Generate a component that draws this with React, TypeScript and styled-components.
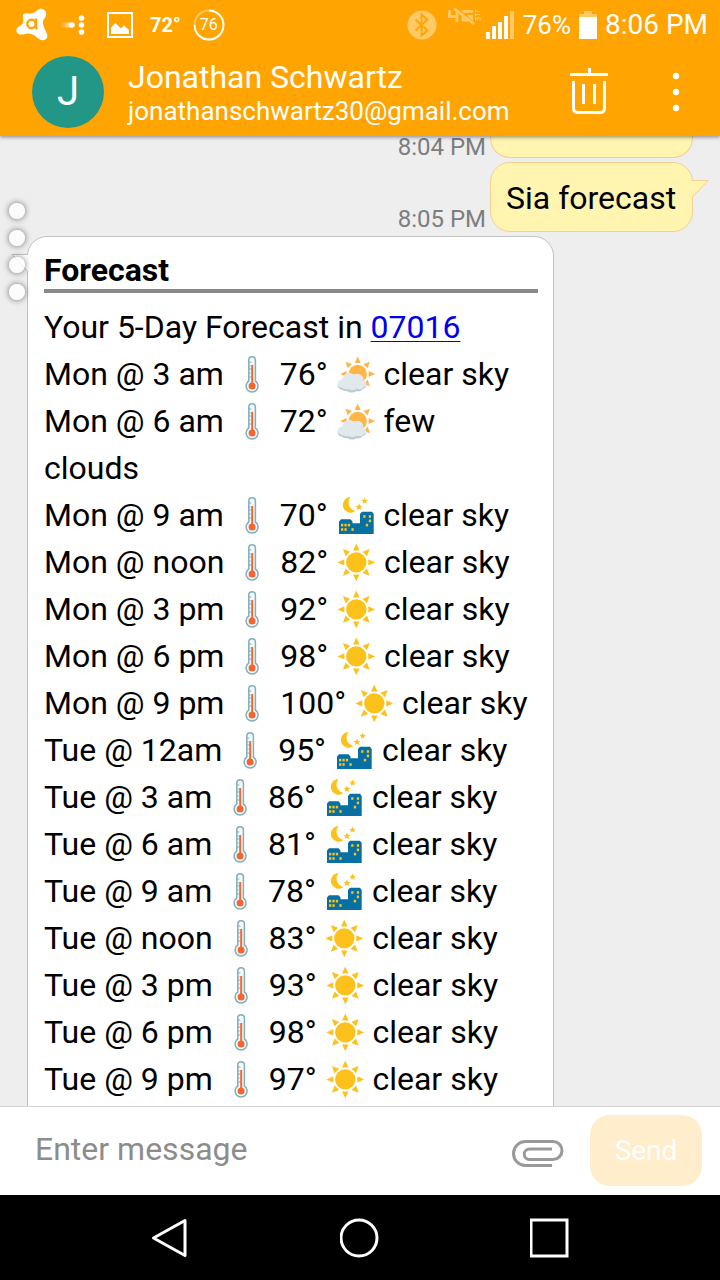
import React from "react";
import styled, { createGlobalStyle } from "styled-components";

const GlobalStyle = createGlobalStyle`
  * { box-sizing: border-box; }
  body { margin: 0; background: #eee; }
  body, button, input { font-family: Roboto, "Liberation Sans", sans-serif; }
  button { padding: 0; border: 0; background: none; cursor: pointer; }
  svg { display: block; }
`;

const Screen = styled.div`
  display: flex;
  flex-direction: column;
  height: 100vh;
  color: #000;
`;

/* ---------- top area ---------- */

const TopArea = styled.header`
  position: relative;
  z-index: 2;
  background: #ffa400;
  color: #fff;
  box-shadow: 0 1px 4px rgba(0, 0, 0, 0.45);
`;

const StatusBar = styled.div`
  display: flex;
  align-items: center;
  justify-content: space-between;
  height: 50px;
  padding: 0 12px 0 16px;
`;

const StatusGroup = styled.div<{ $gap: number }>`
  display: flex;
  align-items: center;
  gap: ${(p) => p.$gap}px;
`;

const StatusText = styled.span<{ $size: number; $bold?: boolean }>`
  font-size: ${(p) => p.$size}px;
  font-weight: ${(p) => (p.$bold ? 700 : 400)};
  line-height: 32px;
  white-space: nowrap;
`;

const ContactBar = styled.div`
  display: flex;
  align-items: center;
  height: 86px;
  padding: 0 38px 2px 32px;
`;

const Avatar = styled.div`
  display: flex;
  align-items: center;
  justify-content: center;
  width: 72px;
  height: 72px;
  border-radius: 50%;
  background: #239787;
  font-size: 40px;
  line-height: 48px;
`;

const Contact = styled.div`
  flex: 1;
  min-width: 0;
  margin-left: 24px;
  white-space: nowrap;
`;

const ContactName = styled.div`
  font-size: 32px;
  line-height: 38px;
`;

const ContactEmail = styled.div`
  font-size: 26px;
  line-height: 30px;
`;

const ContactActions = styled.div`
  display: flex;
  align-items: center;
  gap: 62px;
`;

const IconButton = styled.button`
  display: flex;
  align-items: center;
  justify-content: center;
`;

/* ---------- conversation ---------- */

const Conversation = styled.main`
  position: relative;
  display: flex;
  flex: 1;
  flex-direction: column;
  gap: 4px;
  min-height: 0;
  overflow: hidden;
  padding: 0 27px;
  background: #eee;
`;

const SentRow = styled.div`
  display: flex;
  flex-shrink: 0;
  align-items: flex-end;
  justify-content: flex-end;
  gap: 4px;
`;

const Time = styled.time<{ $scrolled?: boolean }>`
  color: #7d7d7d;
  font-size: 24px;
  line-height: ${(p) => (p.$scrolled ? 22 : 26)}px;
`;

const SentBubble = styled.div<{ $scrolled?: boolean }>`
  position: relative;
  width: 203px;
  height: ${(p) => (p.$scrolled ? 22 : 70)}px;
  padding: 0 15px;
  border: 1px solid #f6cf92;
  border-top-width: ${(p) => (p.$scrolled ? 0 : 1)}px;
  border-radius: ${(p) => (p.$scrolled ? "0 0 20px 20px" : "20px")};
  background: #fff4b0;
  font-size: 32px;
  line-height: 70px;
  white-space: nowrap;
`;

const SentTail = styled.svg`
  position: absolute;
  top: 17px;
  right: -17px;
`;

const Card = styled.section`
  position: relative;
  flex-shrink: 0;
  width: 527px;
  max-width: 100%;
  padding: 14px 15px 48px 16px;
  border: 1px solid #c2c2c2;
  border-radius: 20px;
  background: #fff;
  font-size: 32px;
`;

const CardTail = styled.svg`
  position: absolute;
  top: 17px;
  left: -17px;
`;

const CardTitle = styled.h1`
  margin: 0 0 11px;
  border-bottom: 4px solid #888a88;
  font-size: 32px;
  font-weight: 700;
  line-height: 38px;
`;

const Line = styled.p`
  margin: 0;
  line-height: 47px;

  svg {
    display: inline-block;
    vertical-align: -10px;
  }
`;

const ZipLink = styled.a`
  color: #0000f0;
  text-decoration: underline;
  text-decoration-thickness: 1px;
  text-underline-offset: 3px;
`;

const Handle = styled.div`
  position: absolute;
  top: 67px;
  left: 9px;
  display: flex;
  flex-direction: column;
  gap: 11px;
`;

const HandleDot = styled.span`
  width: 16px;
  height: 16px;
  border-radius: 50%;
  background: rgba(255, 255, 255, 0.8);
  box-shadow: 0 0 6px rgba(0, 0, 0, 0.55);
`;

/* ---------- composer and navigation ---------- */

const Composer = styled.form`
  display: flex;
  align-items: center;
  height: 89px;
  padding: 0 18px 2px 35px;
  border-top: 1px solid #d2d2d2;
  background: #fff;
`;

const MessageInput = styled.input`
  flex: 1;
  min-width: 0;
  height: 60px;
  padding: 0 0 2px;
  border: 0;
  outline: 0;
  font-size: 32px;

  &::placeholder {
    color: #8c8c8c;
    opacity: 1;
  }
`;

const SendButton = styled.button`
  width: 112px;
  height: 71px;
  margin-left: 26px;
  border-radius: 20px;
  background: #ffedcc;
  color: #fff;
  font-size: 28px;
`;

const NavBar = styled.nav`
  display: flex;
  align-items: center;
  justify-content: space-evenly;
  height: 85px;
  background: #000;
`;

/* ---------- weather icons ---------- */

function ray(cx: number, cy: number, angle: number, base: number, tip: number, half: number) {
  const c = Math.cos(angle);
  const s = Math.sin(angle);
  const at = (r: number, o: number) =>
    `${(cx + c * r - s * o).toFixed(1)},${(cy + s * r + c * o).toFixed(1)}`;
  return `M${at(base, -half)}L${at(tip, 0)}L${at(base, half)}Z`;
}

function rays(cx: number, cy: number, base: number, tip: number, half: number) {
  return Array.from({ length: 8 }, (_, i) => ray(cx, cy, (i * Math.PI) / 4, base, tip, half)).join("");
}

const Thermometer = () => (
  <svg width="40" height="40" viewBox="0 0 40 40" role="img" aria-label="temperature">
    <path
      d="M16.8 26V5a3.3 3.3 0 0 1 6.6 0v21a6 6 0 1 1-6.6 0Z"
      fill="#f4fafc"
      stroke="#82aebc"
      strokeWidth="1.5"
    />
    <path d="M17 7h2.4M17 11h1.6M17 14h2.4M17 18h1.6M17 22h2.4" stroke="#82aebc" strokeWidth="1" />
    <path d="M20.2 10v20" stroke="#f2662f" strokeWidth="2" />
    <circle cx="20.1" cy="31" r="3.5" fill="#f2662f" />
  </svg>
);

const SunCloud = () => (
  <svg width="40" height="40" viewBox="0 0 40 40" role="img" aria-label="sun behind cloud">
    <path d={rays(21.7, 19, 11, 17.4, 3)} fill="#ffb548" />
    <circle cx="21.7" cy="19" r="9.2" fill="#ffb548" />
    <path
      d="M6.5 35c-7-1-6-9.5.5-9 1-5 6.5-6 9.5-3 4-3 9.5-1 10 3.5 5 .5 5.5 6.500 0 7.5-1 2-4 3-6 2-3 2-7 2-9 0-2 .5-4 0-5-1Z"
      fill="#b9cdd3"
    />
    <path
      d="M6 33c-6-1-6-8.5.5-8.5 0-6 7-8.5 11-5 5-2.5 11 1 10 6.5 4 1 3.500 5.5.5 6-2 2.5-5 3-7 1.5-3 2-6 2-9 .5-2 .5-4 0-6-1Z"
      fill="#e2e9ec"
    />
  </svg>
);

const windows = [
  [5, 27.8], [8.4, 27.8], [11.8, 27.8], [5, 32.2], [8.4, 32.2],
  [15.4, 32.2], [27.2, 19.2], [32.8, 19.2], [32.8, 23.6], [29.8, 27.8],
];

const NightCity = () => (
  <svg width="40" height="40" viewBox="0 0 40 40" role="img" aria-label="night over a city">
    <path d="M14.5 1.1A7.8 7.8 0 1 0 19.5 15A8.6 8.6 0 0 1 14.5 1.1Z" fill="#fcc21b" />
    <path
      d="m23 7.4 1 2.300 2.500.2-1.900 1.700.6 2.500-2.200-1.300-2.200 1.300.6-2.500-1.900-1.700 2.500-.2ZM28.600 1.600l.9 2.100 2.300.2-1.700 1.500.5 2.300-2-1.200-2 1.200.5-2.300-1.700-1.500 2.300-.2Z"
      fill="#fcc21b"
    />
    <path d="M3 38V25.500l2-2.200h9.500l2 2.200v1.800H24V18l2-2.300h10l1.700 2.300v20Z" fill="#0770a3" />
    {windows.map(([x, y]) => (
      <rect key={`${x}-${y}`} x={x} y={y} width="2.300" height="2.600" fill="#fcc21b" />
    ))}
  </svg>
);

const Sun = () => (
  <svg width="40" height="40" viewBox="0 0 40 40" role="img" aria-label="sun">
    <path d={rays(20.3, 19.4, 12, 18.9, 3.2)} fill="#fcc21b" />
    <circle cx="20.3" cy="19.4" r="10.2" fill="#fcc21b" />
  </svg>
);

const skies = { cloud: SunCloud, night: NightCity, sun: Sun };

type Entry = { when: string; temp: number; sky: keyof typeof skies; text: string };

const forecast: Entry[] = [
  { when: "Mon @ 3 am", temp: 76, sky: "cloud", text: "clear sky" },
  { when: "Mon @ 6 am", temp: 72, sky: "cloud", text: "few clouds" },
  { when: "Mon @ 9 am", temp: 70, sky: "night", text: "clear sky" },
  { when: "Mon @ noon", temp: 82, sky: "sun", text: "clear sky" },
  { when: "Mon @ 3 pm", temp: 92, sky: "sun", text: "clear sky" },
  { when: "Mon @ 6 pm", temp: 98, sky: "sun", text: "clear sky" },
  { when: "Mon @ 9 pm", temp: 100, sky: "sun", text: "clear sky" },
  { when: "Tue @ 12am", temp: 95, sky: "night", text: "clear sky" },
  { when: "Tue @ 3 am", temp: 86, sky: "night", text: "clear sky" },
  { when: "Tue @ 6 am", temp: 81, sky: "night", text: "clear sky" },
  { when: "Tue @ 9 am", temp: 78, sky: "night", text: "clear sky" },
  { when: "Tue @ noon", temp: 83, sky: "sun", text: "clear sky" },
  { when: "Tue @ 3 pm", temp: 93, sky: "sun", text: "clear sky" },
  { when: "Tue @ 6 pm", temp: 98, sky: "sun", text: "clear sky" },
  { when: "Tue @ 9 pm", temp: 97, sky: "sun", text: "clear sky" },
];

function ForecastLine({ when, temp, sky, text }: Entry) {
  const Sky = skies[sky];
  return (
    <Line>
      {when} <Thermometer /> {`${temp}°`} <Sky />
      {text.split(" ").map((word) => (
        <React.Fragment key={word}>
          {" "}
          <span>{word}</span>
        </React.Fragment>
      ))}
    </Line>
  );
}

/* ---------- status bar icons ---------- */

const SecurityIcon = () => (
  <svg width="32" height="34" viewBox="0 0 32 34" aria-hidden="true">
    <path
      d="M12 5.5C16 6 18.5 5 21 2.5C25-1.5 31.5 2 30 7.5C29 11 26 12 27 16C27.500 19 29.5 22 31 26C33 31.5 27 34 23 31C20 28.5 17 26 13 25.5C10 25 8 27 4 26.5C-.5 26-1 20.5 3 18.5C7 16.5 8 14 7 10C6 6 8 4.5 12 5.5Z"
      fill="#fff"
    />
    <circle cx="15.5" cy="16" r="4.2" fill="none" stroke="#ffa400" strokeWidth="2.4" />
    <path d="M20 10.6v8.400q0 1.500 1.500 1.500" fill="none" stroke="#ffa400" strokeWidth="2.4" />
  </svg>
);

const LinkDotsIcon = () => (
  <svg width="25" height="20" viewBox="0 0 25 20" aria-hidden="true">
    <defs>
      <linearGradient id="trail" x1="0" x2="1" y1="0" y2="0">
        <stop offset="0" stopColor="#fff" stopOpacity="0" />
        <stop offset="1" stopColor="#fff" stopOpacity="0.8" />
      </linearGradient>
    </defs>
    <rect x="0" y="7.5" width="12" height="5" fill="url(#trail)" />
    <circle cx="12" cy="10" r="2.8" fill="#fff" />
    <circle cx="21.5" cy="3" r="2.8" fill="#fff" />
    <circle cx="21.5" cy="10" r="2.8" fill="#fff" />
    <circle cx="21.5" cy="17" r="2.8" fill="#fff" />
  </svg>
);

const PictureIcon = () => (
  <svg width="26" height="26" viewBox="0 0 26 26" aria-hidden="true">
    <rect x="1" y="1" width="24" height="24" fill="none" stroke="#fff" strokeWidth="2" />
    <path d="M4 22v-6.500l4.500-4.500 5.500 5.500 3-3 5 4.500v4Z" fill="#fff" />
  </svg>
);

const BatteryRing = styled.span`
  position: relative;
  display: flex;
  align-items: center;
  justify-content: center;
  width: 32px;
  height: 32px;
  font-size: 16px;
  line-height: 32px;

  svg {
    position: absolute;
    inset: 0;
  }
`;

const BluetoothIcon = () => (
  <svg width="30" height="30" viewBox="0 0 30 30" aria-hidden="true">
    <circle cx="15" cy="15" r="14.5" fill="#ffc966" />
    <path d="m8.500 9.500 12 11-6 5v-21l6 5-12 11" fill="none" stroke="#ffa400" strokeWidth="1.8" />
  </svg>
);

const CellOffIcon = () => (
  <svg width="34" height="20" viewBox="0 0 34 20" aria-hidden="true">
    <g fill="none" stroke="#ffc966">
      <path d="M2.500 3v6.500H10M10 3v12" strokeWidth="2.800" />
      <path d="M26 4.400H16v8.600h8.600V9.500h-4" strokeWidth="2.800" />
      <path d="m9.500 1 18 15" stroke="#ffa400" strokeWidth="1.600" />
      <path d="m7 1.500 20 15.500" strokeWidth="2.800" />
      <path d="M28.500 2.800v1.700h4.500M28.500 7.500h4.500M28.500 6v3M28.500 13.500v-2.700h4.500v2.700M30.700 11v2" strokeWidth="1.200" />
    </g>
  </svg>
);

const SignalIcon = () => (
  <svg width="28" height="28" viewBox="0 0 28 28" aria-hidden="true">
    <path d="M0 21h4v7H0ZM6 15h4v13H6ZM12 11h4v17h-4ZM18 5h4v23h-4Z" fill="#fff" />
    <path d="M24 0h4v28h-4Z" fill="#ffc966" />
  </svg>
);

const BatteryIcon = () => (
  <svg width="18" height="28" viewBox="0 0 18 28" aria-hidden="true">
    <path d="M5 0h8v3h5v4H0V3h5Z" fill="#ffc966" />
    <path d="M0 6h18v22H0Z" fill="#fff" />
  </svg>
);

const CellSlot = styled.span`
  padding-bottom: 16px;
`;

export default function App() {
  return (
    <Screen>
      <GlobalStyle />
      <TopArea>
        <StatusBar>
          <StatusGroup $gap={22}>
            <StatusGroup $gap={12}>
              <SecurityIcon />
              <LinkDotsIcon />
            </StatusGroup>
            <StatusGroup $gap={12}>
              <StatusGroup $gap={17}>
                <PictureIcon />
                <StatusText $size={20} $bold>
                  72°
                </StatusText>
              </StatusGroup>
              <BatteryRing>
                <svg width="32" height="32" viewBox="0 0 32 32" aria-hidden="true">
                  <circle cx="16" cy="16" r="14.5" fill="none" stroke="#ffc966" strokeWidth="1.8" />
                  <path d="M16 1.500A14.500 14.500 0 1 1 1.500 16" fill="none" stroke="#fff" strokeWidth="1.8" />
                </svg>
                76
              </BatteryRing>
            </StatusGroup>
          </StatusGroup>
          <StatusGroup $gap={8}>
            <StatusGroup $gap={9}>
              <StatusGroup $gap={10}>
                <BluetoothIcon />
                <StatusGroup $gap={5}>
                  <CellSlot>
                    <CellOffIcon />
                  </CellSlot>
                  <SignalIcon />
                </StatusGroup>
              </StatusGroup>
              <StatusText $size={26}>76%</StatusText>
            </StatusGroup>
            <BatteryIcon />
            <StatusText $size={28}>8:06 PM</StatusText>
          </StatusGroup>
        </StatusBar>
        <ContactBar>
          <Avatar>J</Avatar>
          <Contact>
            <ContactName>Jonathan Schwartz</ContactName>
            <ContactEmail>jonathanschwartz30@gmail.com</ContactEmail>
          </Contact>
          <ContactActions>
            <IconButton type="button" aria-label="Delete conversation">
              <svg width="38" height="48" viewBox="0 0 38 48" fill="none" stroke="#fff" strokeWidth="3">
                <path d="M0 6.500h38M19.500 0v6M3.500 13v27q0 4.500 4.500 4.500h22q4.500 0 4.500-4.500V13M13.500 16v20M24.500 16v20" />
              </svg>
            </IconButton>
            <IconButton type="button" aria-label="More options">
              <svg width="12" height="40" viewBox="0 0 12 40" fill="#fff">
                <circle cx="6" cy="4" r="3.2" />
                <circle cx="6" cy="20" r="3.2" />
                <circle cx="6" cy="36" r="3.2" />
              </svg>
            </IconButton>
          </ContactActions>
        </ContactBar>
      </TopArea>

      <Conversation>
        <SentRow>
          <Time $scrolled>8:04 PM</Time>
          <SentBubble $scrolled />
        </SentRow>
        <SentRow>
          <Time>8:05 PM</Time>
          <SentBubble>
            Sia forecast
            <SentTail width="18" height="19" viewBox="0 0 18 19" aria-hidden="true">
              <path d="M0 .5h16.500L1.500 17.500H0Z" fill="#fff4b0" />
              <path d="M1 .5h16L1 17.500" fill="none" stroke="#f6cf92" />
            </SentTail>
          </SentBubble>
        </SentRow>
        <Card>
          <CardTail width="18" height="19" viewBox="0 0 18 19" aria-hidden="true">
            <path d="M18 .5H1.500L16.500 17.500H18Z" fill="#fff" />
            <path d="M17 .5H1L17 17.500" fill="none" stroke="#c2c2c2" />
          </CardTail>
          <CardTitle>Forecast</CardTitle>
          <Line>
            Your 5-Day Forecast in <ZipLink href="#07016">07016</ZipLink>
          </Line>
          {forecast.map((entry) => (
            <ForecastLine key={entry.when} {...entry} />
          ))}
        </Card>
        <Handle aria-hidden="true">
          <HandleDot />
          <HandleDot />
          <HandleDot />
          <HandleDot />
        </Handle>
      </Conversation>

      <Composer onSubmit={(e) => e.preventDefault()}>
        <MessageInput type="text" aria-label="Message" placeholder="Enter message" />
        <IconButton type="button" aria-label="Attach file">
          <svg width="52" height="34" viewBox="0 -7 52 34" fill="none" stroke="#999" strokeWidth="3">
            <path d="M40 25.500H13.500a12 12 0 0 1 0-24H41a9 9 0 0 1 0 18H17.500a5.200 5.200 0 0 1 0-10.500H40" />
          </svg>
        </IconButton>
        <SendButton type="submit">Send</SendButton>
      </Composer>

      <NavBar aria-label="System">
        <IconButton type="button" aria-label="Back">
          <svg width="40" height="40" viewBox="0 0 40 40" fill="none" stroke="#fff" strokeWidth="3">
            <path d="M35 2.500v35L3.500 20Z" strokeLinejoin="round" />
          </svg>
        </IconButton>
        <IconButton type="button" aria-label="Home">
          <svg width="40" height="40" viewBox="0 0 40 40" fill="none" stroke="#fff" strokeWidth="3">
            <circle cx="19" cy="20" r="18" />
          </svg>
        </IconButton>
        <IconButton type="button" aria-label="Recent apps">
          <svg width="40" height="40" viewBox="0 0 40 40" fill="none" stroke="#fff" strokeWidth="3">
            <rect x="1" y="2" width="36" height="36" />
          </svg>
        </IconButton>
      </NavBar>
    </Screen>
  );
}
